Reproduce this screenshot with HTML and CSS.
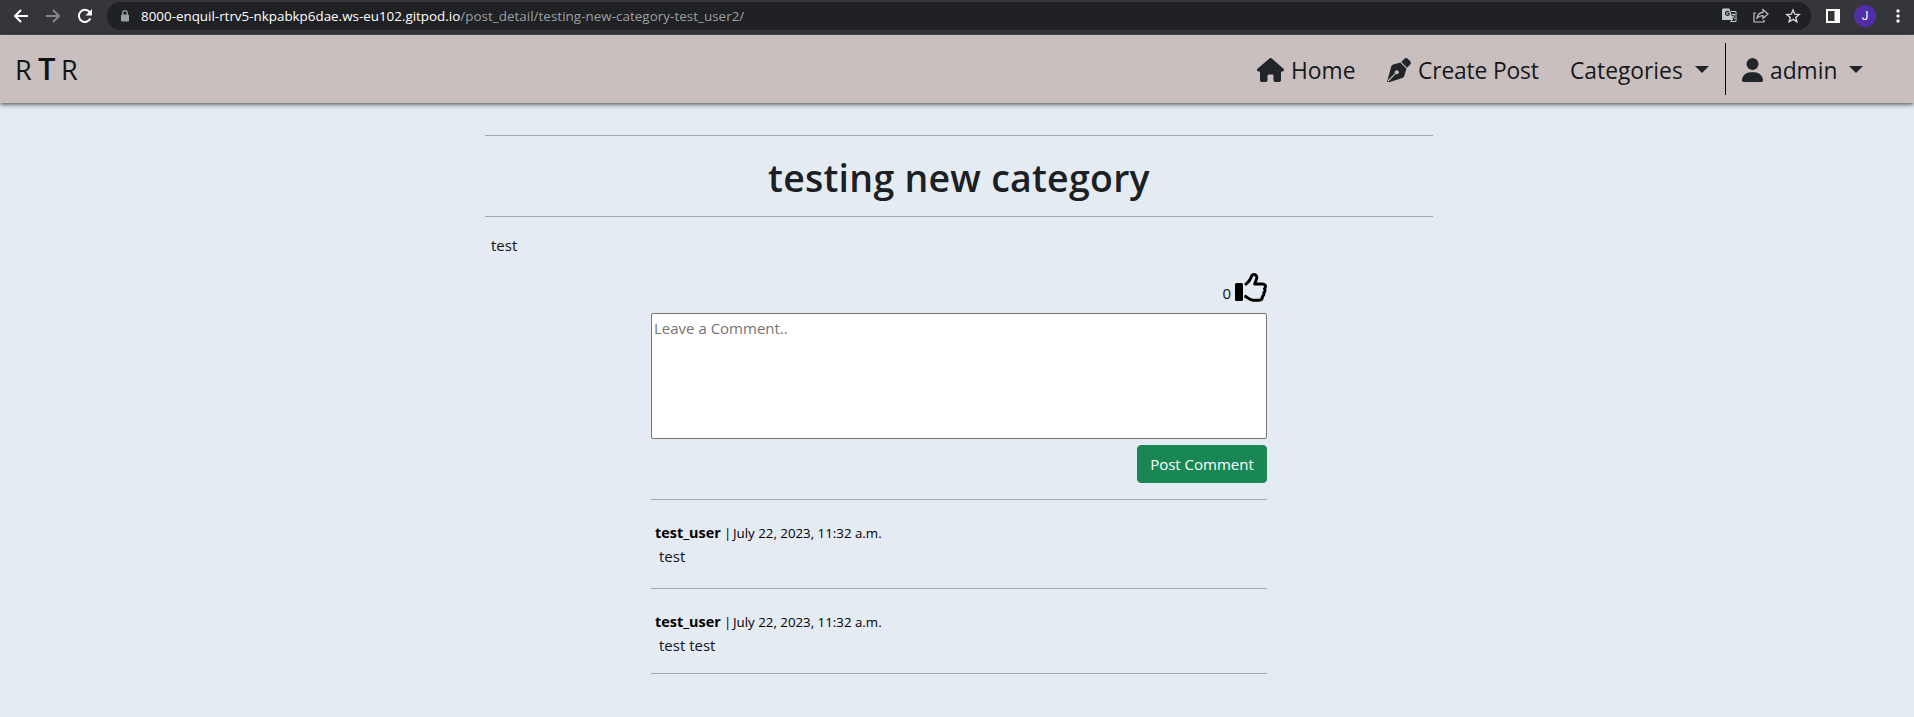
FILE: index.html
```html
<!DOCTYPE html>
<html lang="en">
<head>
<meta charset="utf-8">
<title>RTR - testing new category</title>
<link rel="stylesheet" href="styles.css">
</head>
<body>
<div class="browser">
  <svg class="nav-icon back" viewBox="0 0 16 16" width="16" height="16"><path d="M15 8H2.500M8 2 2 8l6 6"/></svg>
  <svg class="nav-icon forward" viewBox="0 0 16 16" width="16" height="16"><path d="M1 8h12.500M8 2l6 6-6 6"/></svg>
  <svg class="nav-icon reload" viewBox="0 0 16 16" width="16" height="16"><path d="M13.300 10.500A6 6 0 1 1 12.500 4L14 5.500"/><path class="solid" d="M15 1v6.500H8.500z"/></svg>
  <div class="address">
    <svg class="lock" viewBox="0 0 8 12" width="8" height="12"><path d="M1.700 5V3a2.300 2.300 0 0 1 4.600 0v2" fill="none" stroke="#9aa0a6" stroke-width="1.300"/><rect y="4.500" width="8" height="7" rx="1" fill="#9aa0a6"/></svg>
    <div class="url"><span class="host">8000-enquil-rtrv5-nkpabkp6dae.ws-eu102.gitpod.io</span><span class="path">/post_detail/testing-new-category-test_user2/</span></div>
    <div class="tools">
      <svg viewBox="0 0 15 15" width="15" height="15"><path d="M1 .5h6.500L11 12H1a1 1 0 0 1-1-1V1.500z" fill="#c4c7c9"/><path d="M7 4a2 2 0 1 0 0 2.800V5.500H5.500" fill="none" stroke="#202124" stroke-width="1.200"/><path d="M8.800 3.500H14v10H8.500l2-2M9.500 6.500H13M11.200 5.500v1M12.500 6.500c-.4 2-1.500 3-2.500 3.800M10.300 8c.6 1.200 1.500 2 2.700 2.700" fill="none" stroke="#c4c7c9"/></svg>
      <svg viewBox="0 0 16 15" width="16" height="15"><path d="M3 5H1v9h10v-2M4 10c.4-3.500 2.500-5.500 6-5.700V1.500L15 6l-5 4.500V7.700C7.500 7.700 5.500 8.300 4 10z" fill="none" stroke="#c4c7c9" stroke-width="1.200"/></svg>
      <svg viewBox="0 0 16 16" width="16" height="16"><path d="m8 2 1.700 4.200 4.500.3-3.500 2.900 1.200 4.400L8 11.400l-3.900 2.400 1.200-4.400-3.500-2.900 4.500-.3z" fill="none" stroke="#d5d7d9" stroke-width="1.400"/></svg>
    </div>
  </div>
  <svg class="panel" viewBox="0 0 14 14" width="14" height="14"><path fill="#fff" fill-rule="evenodd" d="M0 0h14v14H0zM2 2v10h6.500V2z"/></svg>
  <div class="profile">J</div>
  <svg class="dots" viewBox="0 0 4 14" width="4" height="14"><g fill="#f1f3f4"><circle cx="2" cy="2" r="1.700"/><circle cx="2" cy="7" r="1.700"/><circle cx="2" cy="12" r="1.700"/></g></svg>
</div>

<nav class="navbar">
  <div class="brand"><span>R</span><span class="tall">T</span><span>R</span></div>
  <div class="links">
    <a class="link home"><svg viewBox="0 0 576 512" width="27" height="24"><path d="M575.800 255.500c0 18-15 32.100-32 32.100h-32l.7 160.200c0 2.700-.2 5.400-.5 8.100V472c0 22.100-17.900 40-40 40H392c-22.100 0-40-17.900-40-40v-88c0-17.700-14.300-32-32-32h-64c-17.700 0-32 14.300-32 32v88c0 22.100-17.900 40-40 40h-80c-22.100 0-40-17.900-40-40V287.600H32c-18 0-32-14-32-32.100 0-9 3-17 10-24L266.400 8c7-7 15-8 22-8s15 2 21 7l255.400 224.500c8 7 12 15 11 24z"/></svg><span>Home</span></a>
    <a class="link create"><svg viewBox="0 0 512 512" width="24" height="24"><path d="M362 24a64 64 0 0 1 90 0l36 36a64 64 0 0 1 0 90l-62 58L304 86z"/><path d="M284 98 414 228l-46 158c-6 20-22 36-42 43L60 512 0 512l90-330c7-20 22-36 43-42z"/><path d="M22 490 179 333" fill="none" stroke="#cabfbf" stroke-width="26"/><circle cx="208" cy="304" r="43" fill="#cabfbf"/></svg><span>Create Post</span></a>
    <a class="link categories"><span>Categories</span><i class="caret"></i></a>
    <a class="link account"><svg viewBox="0 0 448 512" width="21" height="24"><path d="M224 256a128 128 0 1 0 0-256 128 128 0 1 0 0 256zm-45.700 48C79.800 304 0 383.800 0 482.300 0 498.700 13.300 512 29.700 512h388.600c16.400 0 29.700-13.300 29.700-29.700 0-98.500-79.800-178.300-178.300-178.300z"/></svg><span>admin</span><i class="caret"></i></a>
  </div>
</nav>

<main class="post">
  <hr>
  <h1>testing new category</h1>
  <hr>
  <p class="body">test</p>
  <section class="discussion">
    <div class="likes"><span>0</span>
      <svg viewBox="0 0 33 29" width="33" height="29"><rect x="1" y="10" width="8" height="18" rx="1.500"/><path d="M11 12C14 9.500 16 7.500 17 4.500c.6-2 1.500-3 3-3 2.500 0 3.200 2.300 2.500 4.500L20.700 11H28c4 0 4.200 3 2.500 4.800 1 1.200.6 3-.8 4 .5 1.500 0 2.700-1.200 3.500 0 2.500-1.200 4-3.500 4h-6c-3.500 0-5.500-3.300-8.500-4.500" fill="none" stroke="#000" stroke-width="2.900" stroke-linejoin="round"/></svg>
    </div>
    <textarea placeholder="Leave a Comment.."></textarea>
    <div class="actions"><button>Post Comment</button></div>
    <article class="comment">
      <div class="meta"><b>test_user</b><span class="bar">|</span><time>July 22, 2023, 11:32 a.m.</time></div>
      <p>test</p>
    </article>
    <article class="comment last">
      <div class="meta"><b>test_user</b><span class="bar">|</span><time>July 22, 2023, 11:32 a.m.</time></div>
      <p>test test</p>
    </article>
  </section>
</main>
</body>
</html>
```

FILE: styles.css
```css
* { box-sizing: border-box; }
body {
  margin: 0;
  min-height: 717px;
  background: #e4ebf2;
  color: #111417;
  font: 15px/24px "Segoe UI", "Open Sans", "Noto Sans", sans-serif;
  overflow: hidden;
}
svg { display: block; flex: none; }

.browser {
  display: flex;
  align-items: center;
  height: 35px;
  padding: 0 0 3px 13px;
  background: #35363a;
  border-bottom: 1px solid #55565a;
}
.nav-icon { fill: none; stroke: #fff; stroke-width: 2; }
.forward { margin-left: 16px; stroke: #85878a; }
.reload { margin-left: 16px; }
.solid { fill: #fff; stroke: none; }
.address {
  display: flex;
  align-items: center;
  flex: none;
  width: 1704px;
  height: 28px;
  margin-left: 14px;
  padding: 0 10px 0 14px;
  border-radius: 14px;
  background: #202124;
}
.url {
  margin-left: 12px;
  font-size: 13.400px;
  line-height: 20px;
  white-space: nowrap;
}
.host { color: #fff; }
.path { color: #9aa0a6; letter-spacing: .04px; }
.tools { display: flex; align-items: center; gap: 16px; margin-left: auto; }
.panel { margin-left: 15px; }
.profile {
  width: 22px;
  height: 22px;
  margin-left: 14px;
  border-radius: 50%;
  background: #512da8;
  color: #fff;
  font: 12px/22px Roboto, sans-serif;
  text-align: center;
}
.dots { margin-left: 20px; }

.navbar {
  display: flex;
  justify-content: space-between;
  height: 68px;
  background: #cabfbf;
  box-shadow: 0 1px 5px rgba(0, 0, 0, .75);
}
.brand {
  display: flex;
  align-items: baseline;
  height: 68px;
  padding-left: 15px;
  font-size: 27px;
  line-height: 66px;
}
.brand span { width: 22px; }
.brand .tall { width: 24px; padding-left: 1px; font-size: 31px; font-weight: 600; }
.links { display: flex; padding: 8px 51px 8px 0; }
.link {
  display: flex;
  align-items: center;
  height: 52px;
  padding-top: 2px;
  color: #15191c;
  fill: #212529;
  font-size: 22.800px;
  line-height: 36px;
  white-space: nowrap;
}
.link span { padding-top: 2px; }
.link svg { margin-right: 7px; }
.home { width: 130px; }
.create { width: 183px; letter-spacing: -.15px; }
.categories { width: 156px; border-right: 1px solid #000; }
.account { padding-left: 16px; width: 137px; }
.caret {
  margin-left: 12px;
  border: 7px solid transparent;
  border-top-color: #212529;
  border-bottom: 0;
}
.link .caret { margin-top: -2px; }

.post { width: 948px; margin: 32px 0 0 485px; }
hr { height: 1px; margin: 0; border: 0; background: #a4a8b2; }
h1 {
  margin: 0;
  height: 80px;
  color: #1b2024;
  font-size: 37.500px;
  font-weight: 600;
  line-height: 84px;
  letter-spacing: .25px;
  text-align: center;
}
.body { margin: 16px 0 0; padding-left: 6px; }
.discussion { width: 616px; margin: 15px 0 0 166px; }
.likes {
  display: flex;
  justify-content: flex-end;
  height: 41px;
}
.likes span { margin: 9px 3px 0 0; }
.likes svg { margin-top: 1px; }
textarea {
  display: block;
  width: 616px;
  height: 126px;
  padding: 2px;
  border: 1px solid #767676;
  border-radius: 2px;
  background: #fff;
  font: inherit;
  resize: none;
}
textarea::placeholder { color: #757575; }
.actions { display: flex; justify-content: flex-end; height: 60px; padding-top: 6px; }
button {
  width: 130px;
  height: 38px;
  padding: 0;
  border: 1px solid #198754;
  border-radius: 4px;
  background: #198754;
  color: #fff;
  font: inherit;
}
.comment { height: 89px; padding: 21px 0 0 4px; border-top: 1px solid #a4a8b2; }
.last { height: 86px; border-bottom: 1px solid #a4a8b2; }
.meta { display: flex; align-items: baseline; height: 23px; color: #000; }
.meta b { width: 69px; font-size: 14.400px; }
.bar, time { font-size: 13.300px; }
.bar { width: 9px; }
.comment p { margin: 0 0 0 4px; }
```
